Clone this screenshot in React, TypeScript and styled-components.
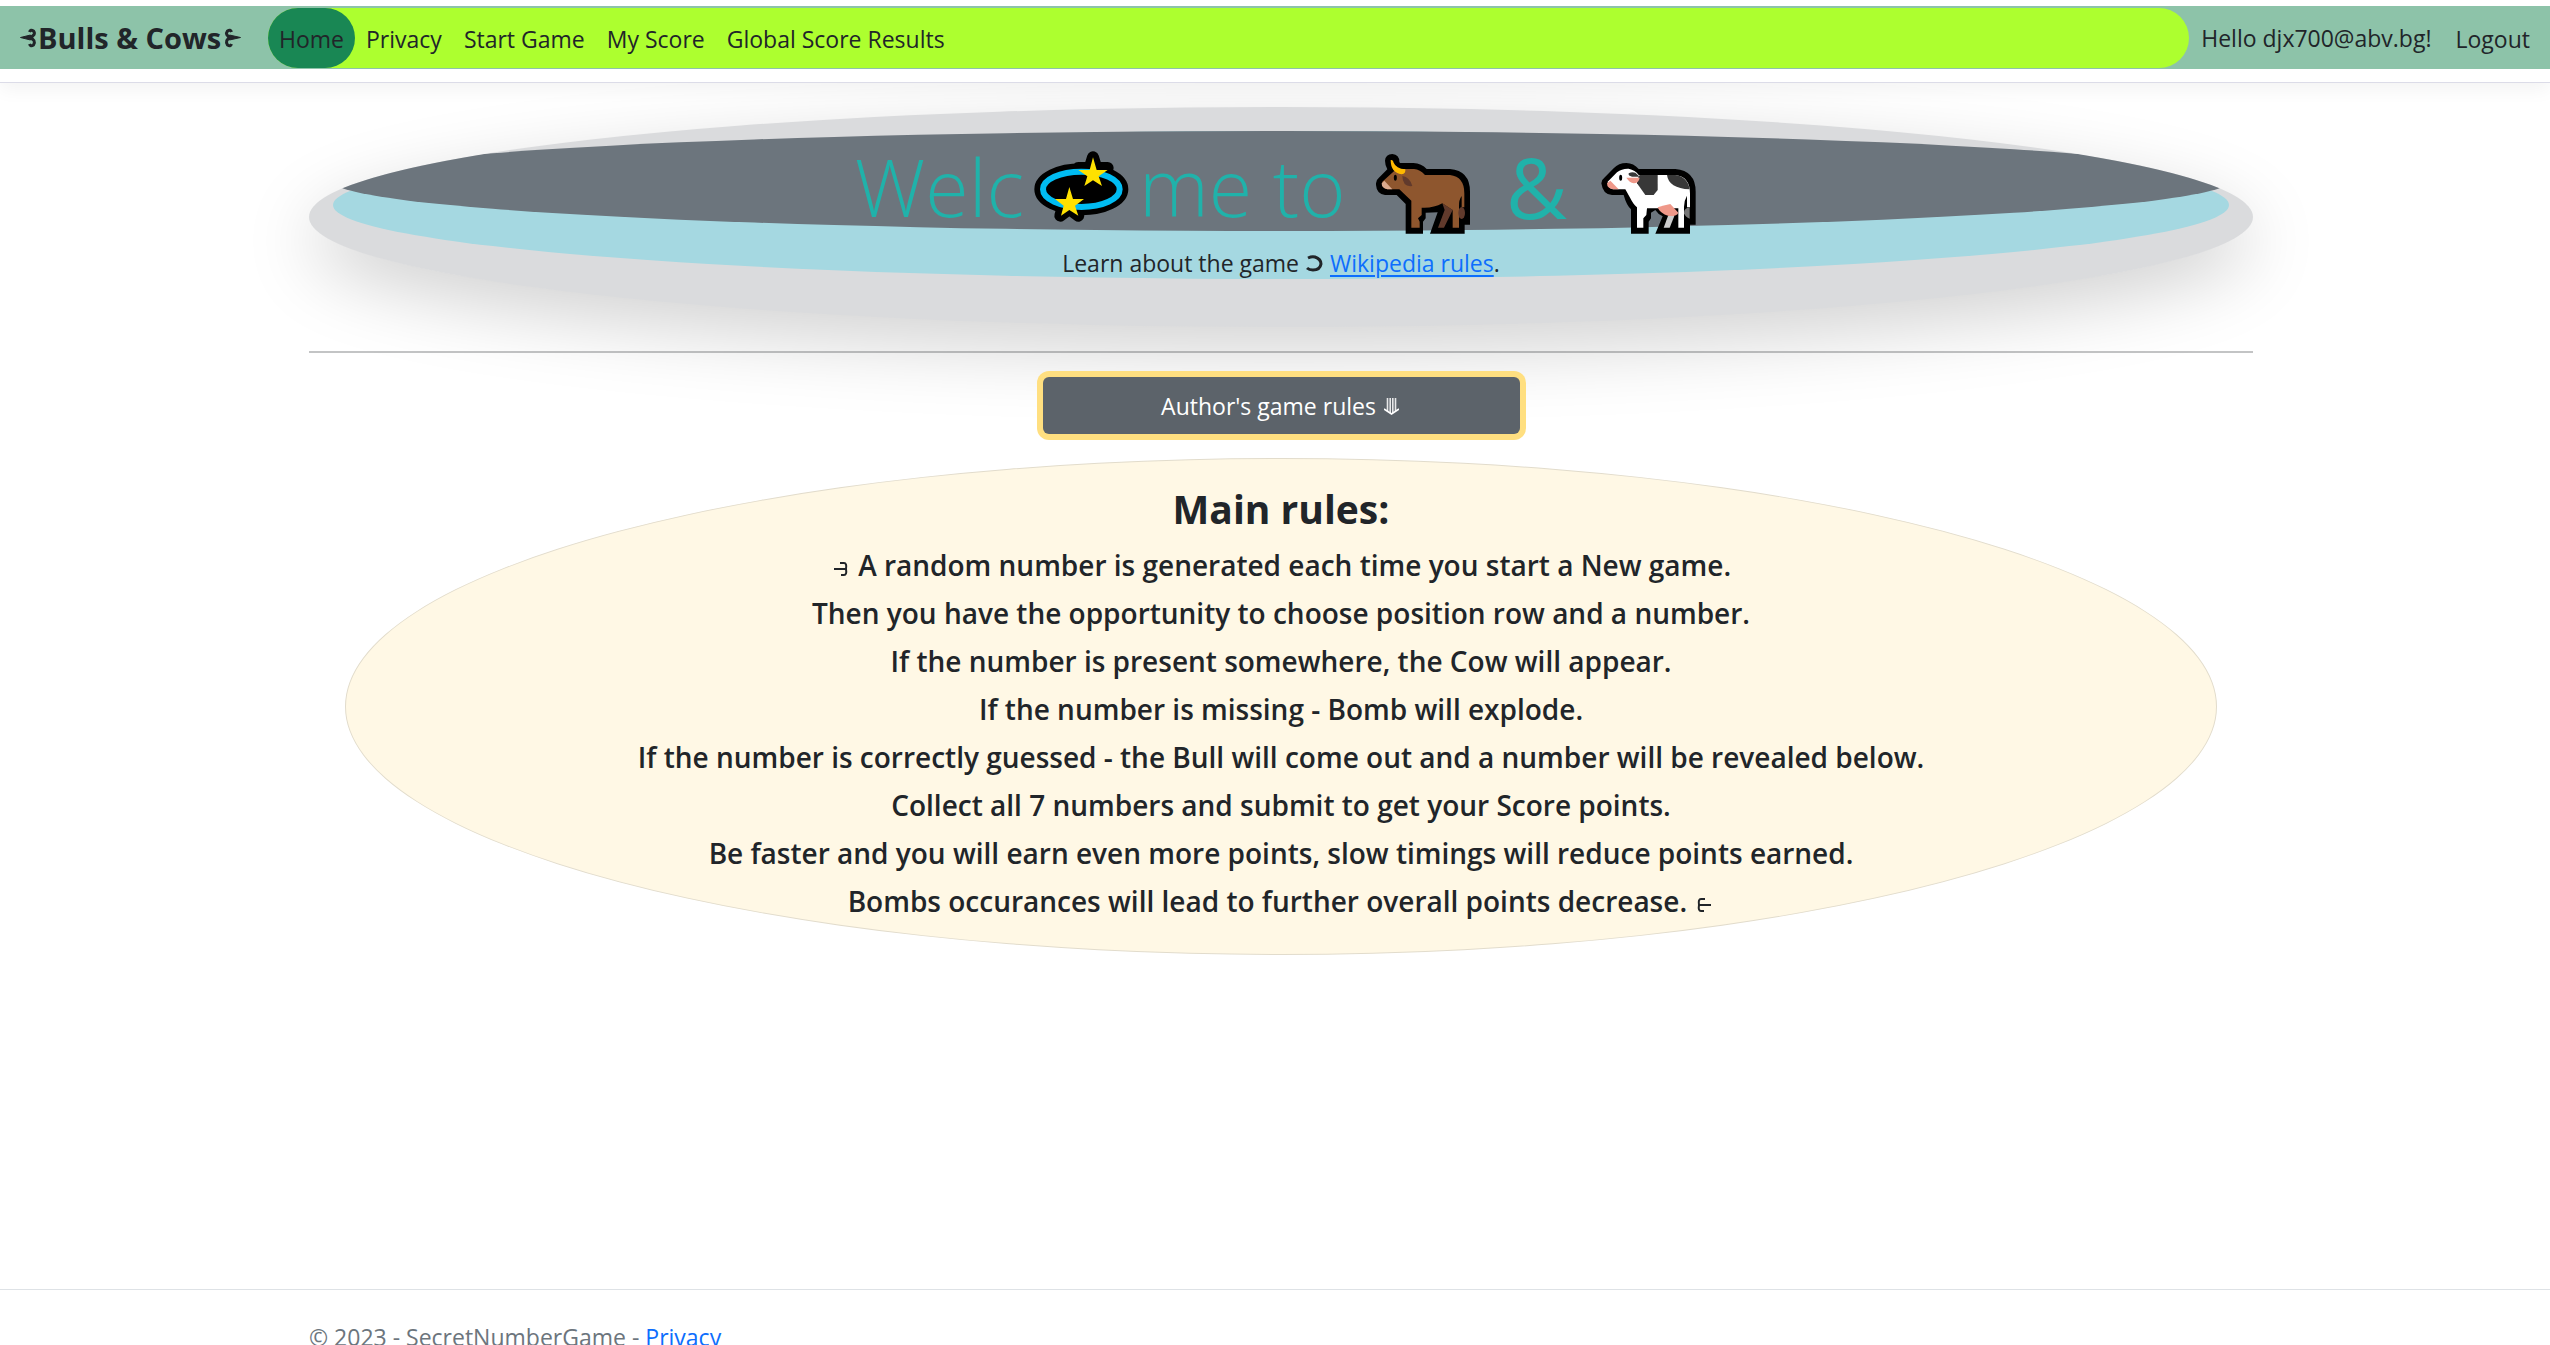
import React from "react";
import styled, { createGlobalStyle } from "styled-components";

const GlobalStyle = createGlobalStyle`
  *, *::before, *::after { box-sizing: border-box; }
  body {
    margin: 0;
    background: #fff;
    color: #212529;
    font-family: "Open Sans", "Noto Sans", sans-serif;
    font-size: 23px;
    line-height: 36px;
  }
  h1, h2, p { margin: 0; }
`;

const Page = styled.div`
  display: flex;
  flex-direction: column;
  height: 100vh;
  overflow: hidden;
`;

const Header = styled.header`
  position: relative;
  z-index: 1;
  padding: 6px 0 13px;
  background: #fff;
  border-bottom: 1px solid #dcdce8;
  box-shadow: 0 6px 18px rgba(0, 0, 0, 0.05);
`;

const Navbar = styled.nav`
  display: flex;
  align-items: center;
  height: 63px;
  padding: 0 8px 0 20px;
  background: #8dc3a9;
`;

const Brand = styled.a`
  display: flex;
  align-items: center;
  width: 248px;
  color: inherit;
  font-size: 29px;
  font-weight: 700;
  text-decoration: none;
  white-space: nowrap;
`;

const NavList = styled.ul`
  display: flex;
  flex: 1;
  height: 60px;
  margin: 0;
  padding: 0;
  list-style: none;
  background: #adff2f;
  border-radius: 30px;
`;

const NavLink = styled.a<{ $active?: boolean }>`
  display: block;
  padding: 0 11px;
  color: inherit;
  line-height: 62px;
  height: 60px;
  text-decoration: none;
  white-space: nowrap;
  border-radius: 30px;
  background: ${(p) => (p.$active ? "#198754" : "transparent")};
`;

const Greeting = styled.span`
  padding: 0 12px;
  white-space: nowrap;
`;

const LogoutButton = styled.button`
  padding: 2px 12px 0;
  border: 0;
  background: none;
  color: inherit;
  font: inherit;
`;

const Container = styled.div`
  width: 100%;
  max-width: 1992px;
  margin: 0 auto;
  padding: 0 18px 0 30px;
`;

const Main = styled.main`
  flex: 1;
  padding-top: 24px;
`;

const Banner = styled.section`
  height: 220px;
  padding: 24px;
  overflow: hidden;
  border-radius: 50%;
  background: #dadbdd;
  box-shadow: 0 24px 72px rgba(0, 0, 0, 0.175);
  text-align: center;
`;

const BannerInner = styled.div`
  height: 148px;
  border-radius: 50%;
  background: #a5d8e1;
`;

const Title = styled.h1`
  display: flex;
  justify-content: center;
  height: 100px;
  margin-bottom: 14px;
  border-radius: 50%;
  background: #6c757d;
  color: #20b2aa;
  font-size: 79px;
  font-weight: 300;
  line-height: 112px;
  white-space: pre;
`;

const Ampersand = styled.span`
  padding: 0 25px;
  font-size: 84px;
  font-weight: 400;
`;

const Emoji = styled.svg`
  flex: none;
  width: 115px;
  height: 106px;
`;

const Mark = styled.svg<{ $w: number; $h: number; $gap?: number }>`
  flex: none;
  width: ${(p) => p.$w}px;
  height: ${(p) => p.$h}px;
  margin: 0 ${(p) => p.$gap ?? 0}px;
  fill: none;
  stroke: currentColor;
`;

const TextLink = styled.a<{ $plain?: boolean }>`
  color: #0d6efd;
  text-decoration: ${(p) => (p.$plain ? "none" : "underline")};
  text-underline-offset: 3px;
`;

const Divider = styled.hr`
  height: 2px;
  margin: 24px 0;
  border: 0;
  background: #212529;
  opacity: 0.27;
`;

const RulesButton = styled.button`
  display: block;
  position: relative;
  width: 477px;
  height: 57px;
  margin: 0 auto 24px;
  padding: 0;
  border: 0;
  border-radius: 6px;
  background: #5c636a;
  color: #fff;
  font: inherit;
  box-shadow: 0 0 0 6px #ffdf80;
`;

const RulesCard = styled.section`
  margin: 0 36px;
  padding: 24px 0 29px;
  border: 1px solid #e2dccc;
  border-radius: 50%;
  background: #fff8e5;
  text-align: center;
`;

const RulesTitle = styled.h2`
  margin-bottom: 6px;
  font-size: 39px;
  font-weight: 700;
  line-height: 52px;
`;

const Rule = styled.p`
  font-size: 28px;
  font-weight: 600;
  line-height: 48px;
`;

const Footer = styled.footer`
  height: 56px;
  overflow: hidden;
  border-top: 1px solid #dee2e6;
  color: #6c757d;
  line-height: 94px;
`;

const LeftCurl = () => (
  <Mark $w={18} $h={20} viewBox="0 0 17 20" strokeWidth="3" aria-hidden="true">
    <path d="M9 4Q10 1 13 3Q16 7 9 9.500Q16 12 13 17Q10 19 9 16" />
    <path d="M0 9.500L10 7V12Z" fill="currentColor" strokeWidth="1" />
  </Mark>
);

const RightCurl = () => (
  <Mark $w={18} $h={20} $gap={2} viewBox="0 0 17 20" strokeWidth="3" aria-hidden="true">
    <path d="M8 4Q7 1 4 3Q1 7 7 9.500Q1 12 4 17Q7 19 8 16" />
    <path d="M17 9.500L6 7V12Z" fill="currentColor" strokeWidth="1" />
  </Mark>
);

const TailLeft = () => (
  <Mark $w={14} $h={14} $gap={3} viewBox="0 0 14 14" strokeWidth="2" aria-hidden="true">
    <path d="M0 7H12M6 1H10Q13 1 12 7Q13 13 10 13H7" />
  </Mark>
);

const TailRight = () => (
  <Mark $w={14} $h={14} $gap={3} viewBox="0 0 14 14" strokeWidth="2" aria-hidden="true">
    <path d="M14 7H2M8 1H4Q1 1 2 7Q1 13 4 13H7" />
  </Mark>
);

const Crescent = () => (
  <Mark $w={17} $h={17} $gap={1} viewBox="0 0 17 17" aria-hidden="true">
    <path d="M2 3Q6 1 9 2Q15 4 15 9Q14 15 7 15Q3 15 1 13" strokeWidth="3" />
  </Mark>
);

const DownArrow = () => (
  <Mark $w={15} $h={17} $gap={2} viewBox="0 0 15 17" aria-hidden="true">
    <path d="M3.500 0V13M6.200 0V15M8.800 0V15M11.500 0V13" strokeWidth="1.600" opacity="0.85" />
    <path d="M0 11L7.500 16L15 11" strokeWidth="1.600" />
  </Mark>
);

const Dizzy = () => (
  <Emoji viewBox="573 3 345 318" role="img" aria-label="dizzy">
    <g fill="#000" stroke="#000" strokeWidth="36" strokeLinejoin="round">
      <ellipse cx="745" cy="178" rx="123" ry="60" />
      <path d="M780 82L790 114H824L797 134L807 168L780 148L753 168L763 134L736 114H770Z" />
      <path d="M709 171L719 203H753L726 223L736 257L709 237L682 257L692 223L665 203H699Z" />
      <path d="M790 116H824" />
    </g>
    <ellipse cx="745" cy="178" rx="115" ry="53" fill="none" stroke="#00bcf2" strokeWidth="18" />
    <g fill="#ffe100">
      <path d="M780 82L791 120H824L797 139L807 168L780 151L754 168L763 139L736 120H770Z" />
      <path d="M709 171L720 207H753L726 227L736 257L709 240L684 257L692 227L666 207H699Z" />
    </g>
  </Emoji>
);

const Ox = () => (
  <Emoji viewBox="288 3 345 318" role="img" aria-label="bull">
    <path d="M318 160Q318 150 326 144L352 118Q345 105 345 92Q347 72 367 72Q388 74 388 95L390 99H430Q455 100 470 117H540Q600 122 600 185V284H584V311H480L503 247L467 248V265L459 275V311H407V222L380 195H345Q320 192 318 165Z" />
    <path fill="#613a2c" d="M517 220L548 240L522 293H504L524 240Z" />
    <path fill="#8e562e" d="M337 155L365 130Q375 118 400 117H432Q450 118 465 135H540Q583 140 583 190V232H575V198Q566 210 567 230V293H548V240L517 220Q490 235 455 233V255L444 265L449 275V293H424V212L388 178H352Q337 175 337 155Z" />
    <ellipse cx="575" cy="249" rx="10" ry="18" fill="#613a2c" />
    <path fill="#613a2c" d="M397 138Q420 142 427 168Q398 172 397 138Z" />
    <path fill="#dbab8f" d="M343 152L367 178H352Q335 175 335 160Z" />
    <path fill="#ffb900" d="M362 90Q370 88 371 98Q378 115 406 118Q408 132 395 133Q362 128 362 90Z" />
    <ellipse cx="376" cy="143" rx="4.500" ry="9" />
  </Emoji>
);

const Cow = () => (
  <Emoji viewBox="975 3 345 318" role="img" aria-label="cow">
    <path d="M1003 160Q1004 148 1012 143L1040 115Q1055 99 1078 99Q1100 99 1115 117H1225Q1286 122 1286 185V284H1269V311H1165L1187 259Q1174 254 1165 240L1152 248V265L1145 275V311H1092V238Q1078 225 1070 195H1035Q1008 195 1003 160Z" />
    <path fill="#fff" d="M1022 155L1050 127Q1065 115 1085 116Q1105 120 1115 135H1225Q1269 140 1269 190V232H1260V197Q1251 212 1251 230V293H1234V235H1140L1138 255L1129 265V293H1110V232Q1100 225 1090 205L1075 178H1038Q1022 175 1022 155Z" />
    <g fill="#383838">
      <path d="M1110 150L1118 135H1172V180L1160 195H1135L1110 160Z" />
      <path d="M1085 130Q1095 124 1105 128L1118 140H1095Q1083 138 1085 130Z" />
      <path d="M1200 135H1225Q1262 140 1268 178Q1205 175 1200 135Z" />
    </g>
    <g fill="#ef9889">
      <path d="M1078 143H1118Q1115 160 1100 160Q1088 158 1078 143Z" />
      <path d="M1030 152L1055 178H1038Q1020 175 1020 160Z" />
      <path d="M1172 232Q1190 226 1210 222L1234 248Q1230 260 1205 258Q1178 250 1172 232Z" />
    </g>
    <path fill="#ccc" d="M1203 258H1222L1208 293H1190Z" />
    <path fill="#767676" d="M1268 232Q1250 235 1251 250Q1255 262 1268 266Z" />
    <ellipse cx="1061" cy="143" rx="4.500" ry="9" />
  </Emoji>
);

const navItems = ["Home", "Privacy", "Start Game", "My Score", "Global Score Results"];

const rules = [
  "Then you have the opportunity to choose position row and a number.",
  "If the number is present somewhere, the Cow will appear.",
  "If the number is missing - Bomb will explode.",
  "If the number is correctly guessed - the Bull will come out and a number will be revealed below.",
  "Collect all 7 numbers and submit to get your Score points.",
  "Be faster and you will earn even more points, slow timings will reduce points earned.",
];

export default function App() {
  return (
    <Page>
      <GlobalStyle />
      <Header>
        <Navbar>
          <Brand href="#">
            <LeftCurl />
            Bulls &amp; Cows
            <RightCurl />
          </Brand>
          <NavList>
            {navItems.map((item, i) => (
              <li key={item}>
                <NavLink href="#" $active={i === 0}>
                  {item}
                </NavLink>
              </li>
            ))}
          </NavList>
          <Greeting>Hello djx700@abv.bg!</Greeting>
          <LogoutButton type="button">Logout</LogoutButton>
        </Navbar>
      </Header>
      <Main>
        <Container>
          <Banner>
            <BannerInner>
              <Title>
                Welc
                <Dizzy />
                {"me to "}
                <Ox />
                <Ampersand>&amp;</Ampersand>
                <Cow />
              </Title>
              <p>
                Learn about the game <Crescent /> <TextLink href="#">Wikipedia rules</TextLink>.
              </p>
            </BannerInner>
          </Banner>
          <Divider />
          <RulesButton type="button">
            Author's game rules <DownArrow />
          </RulesButton>
          <RulesCard>
            <RulesTitle>Main rules:</RulesTitle>
            <Rule>
              <TailLeft /> A random number is generated each time you start a New game.
            </Rule>
            {rules.map((rule) => (
              <Rule key={rule}>{rule}</Rule>
            ))}
            <Rule>
              Bombs occurances will lead to further overall points decrease. <TailRight />
            </Rule>
          </RulesCard>
        </Container>
      </Main>
      <Footer>
        <Container>
          © 2023 - SecretNumberGame -{" "}
          <TextLink href="#" $plain>
            Privacy
          </TextLink>
        </Container>
      </Footer>
    </Page>
  );
}
